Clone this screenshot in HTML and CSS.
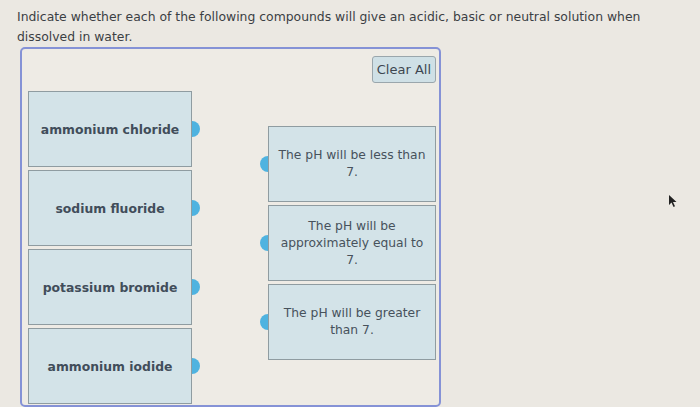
FILE: index.html
```html
<!DOCTYPE html>
<html lang="en">
<head>
    <meta charset="UTF-8">
    <meta name="viewport" content="width=device-width, initial-scale=1.0">
    <title>Acidic, Basic or Neutral</title>
    <link rel="stylesheet" href="styles.css">
</head>
<body>
    <p class="prompt">Indicate whether each of the following compounds will give an acidic, basic or neutral solution when dissolved in water.</p>

    <div class="board">
        <div class="toolbar">
            <button class="clear-btn">Clear All</button>
        </div>
        <div class="columns">
            <div class="sources">
                <div class="tile source">ammonium chloride</div>
                <div class="tile source">sodium fluoride</div>
                <div class="tile source">potassium bromide</div>
                <div class="tile source">ammonium iodide</div>
            </div>
            <div class="targets">
                <div class="tile target">The pH will be less than 7.</div>
                <div class="tile target">The pH will be approximately equal to 7.</div>
                <div class="tile target">The pH will be greater than 7.</div>
            </div>
        </div>
    </div>

    <!-- mouse pointer -->
    <svg class="pointer" width="10" height="14" viewBox="0 0 10 14">
        <path d="M1 1 L1 11 L3.5 8.5 L5.5 13 L7 12.3 L5 8 L8.5 8 Z" fill="#222"/>
    </svg>
</body>
</html>
```

FILE: styles.css
```css
body {
    margin: 0;
    background: #ebe8e2;
    font-family: "DejaVu Sans", Verdana, sans-serif;
    color: #3b3f44;
    position: relative;
    height: 407px;
    overflow: hidden;
}

.prompt {
    margin: 0;
    padding: 7px 40px 0 17px;
    font-size: 12.4px;
    line-height: 20px;
}

.board {
    margin: 0 0 0 20px;
    width: 411px;
    border: 2px solid #8592d6;
    border-radius: 5px;
    background: #eeebe5;
    padding: 7px 0 1px 6px;
}

.toolbar {
    display: flex;
    justify-content: flex-end;
    padding-right: 3px;
}

.clear-btn {
    font-family: inherit;
    font-size: 13px;
    color: #3d4650;
    background: #cfe0e6;
    border: 1px solid #9aa6ac;
    border-radius: 3px;
    height: 27px;
    padding: 0 4px;
}

.columns {
    display: flex;
    justify-content: space-between;
    margin-top: 8px;
    padding-right: 3px;
}

.sources,
.targets {
    display: flex;
    flex-direction: column;
    gap: 3px;
}

.targets {
    margin-top: 35px;
}

.tile {
    position: relative;
    box-sizing: border-box;
    height: 76px;
    background: #d3e3e8;
    border: 1px solid #8f9ca1;
    display: flex;
    align-items: center;
    justify-content: center;
    text-align: center;
    font-size: 12.3px;
    line-height: 17px;
}

.source {
    width: 164px;
    font-weight: bold;
    font-size: 12.4px;
    color: #414d5a;
}

.target {
    width: 168px;
    padding: 0 6px;
    color: #47525c;
}

/* half-round handles on the tile edges */
.source::after,
.target::before {
    content: "";
    position: absolute;
    top: 50%;
    width: 8px;
    height: 16px;
    margin-top: -8px;
    background: #4fb3e0;
}

.source::after {
    right: -9px;
    border-radius: 0 8px 8px 0;
}

.target::before {
    left: -9px;
    border-radius: 8px 0 0 8px;
}

.pointer {
    position: absolute;
    left: 668px;
    top: 194px;
}
```
